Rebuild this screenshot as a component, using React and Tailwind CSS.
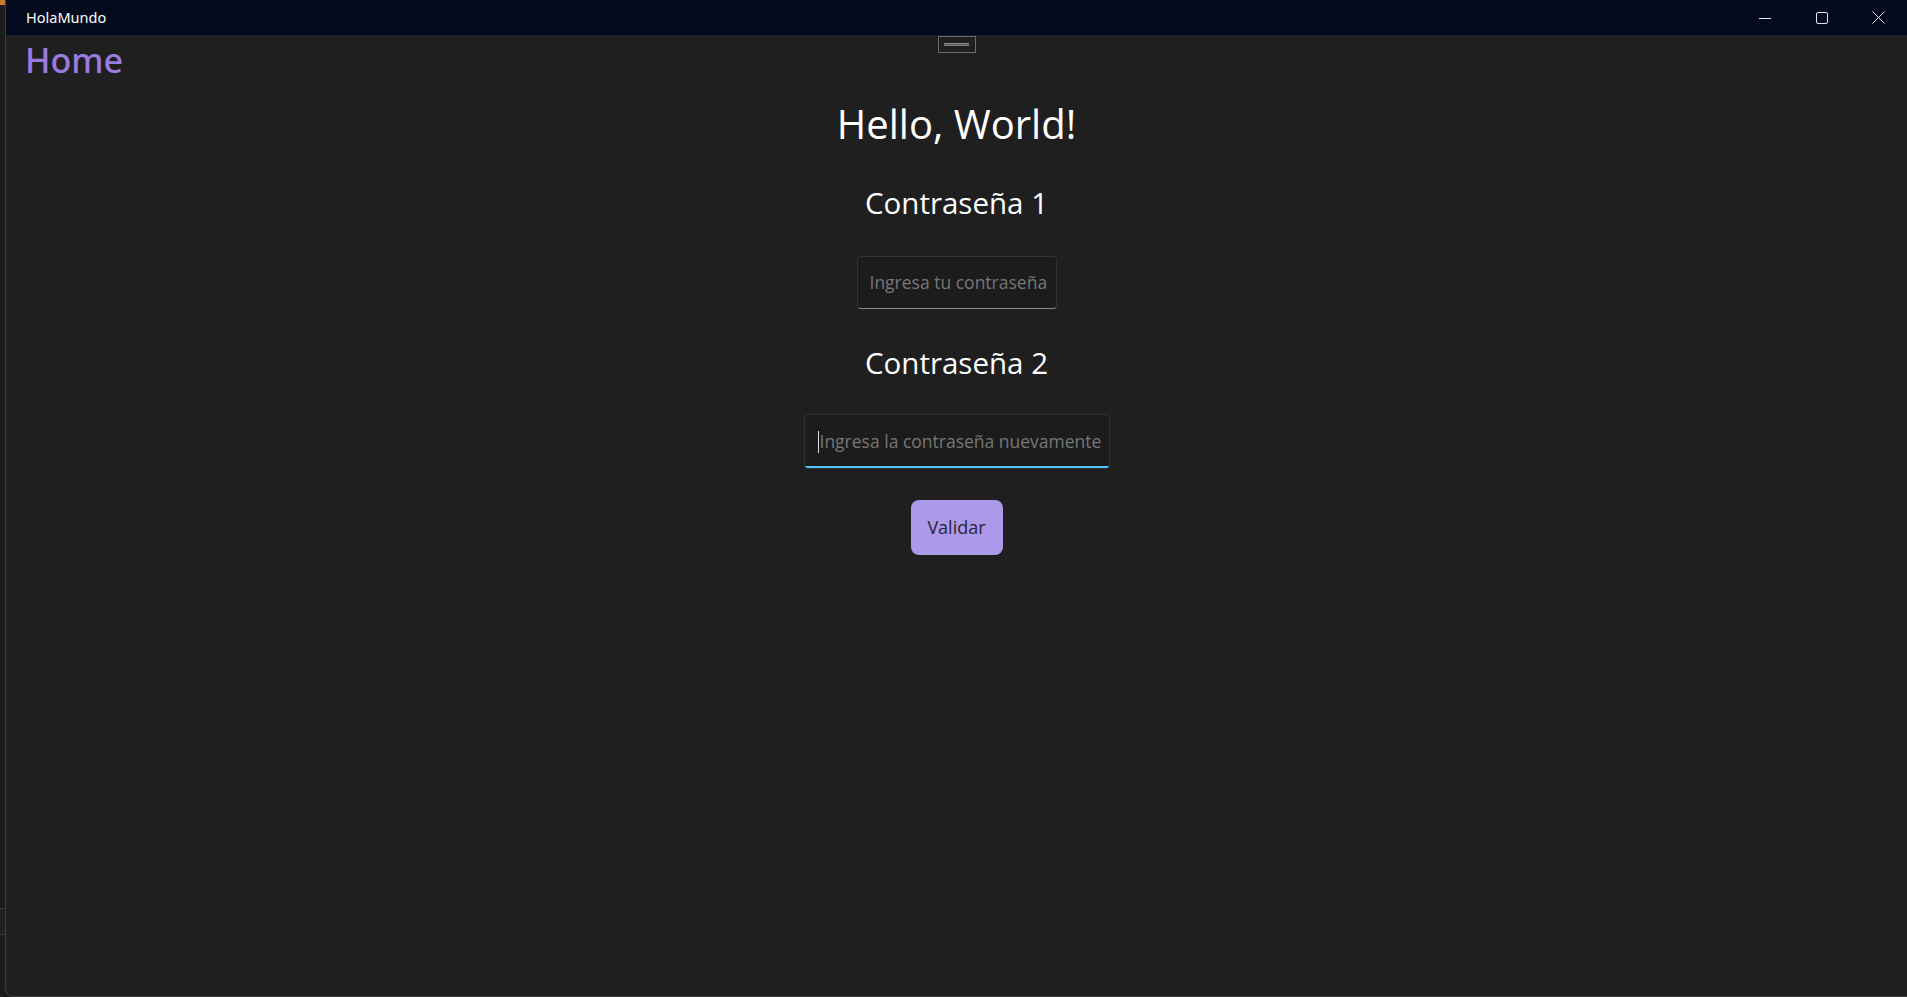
import React from "react";

export default function App() {
  const body = { fontFamily: '"Open Sans", "Noto Sans", sans-serif' };
  return (
    <div className="flex h-[997px] w-[1907px] overflow-hidden bg-[#161616]" style={body}>
      {/* left sliver of another window */}
      <div className="flex w-[5px] flex-col">
        <div className="h-[5px] w-[5px] bg-[#c77a2a]" />
        <div className="h-[903px] bg-[#1b1b1b]" />
        <div className="h-[1px] bg-[#3a3a3a]" />
        <div className="h-[25px] bg-[#202020]" />
        <div className="h-[1px] bg-[#3a3a3a]" />
        <div className="flex-1 bg-[#1b1b1b]" />
      </div>
      <div className="flex flex-1 flex-col overflow-hidden rounded-bl-[8px] border-l border-b border-[#3c3c3c] bg-[#1f1f1f]">
        {/* title bar */}
        <div className="flex h-[35px] items-center bg-[#010b1d] pl-[20px] text-white">
          <span className="text-[14.5px] leading-none" style={{ fontFamily: '"Noto Sans", "Open Sans", sans-serif' }}>HolaMundo</span>
          <div className="ml-auto flex h-full items-center">
            <div className="flex h-full w-[57px] items-center justify-center">
              <svg width="12" height="12" viewBox="0 0 12 12"><line x1="0" y1="6.5" x2="12" y2="6.5" stroke="#e6e6e6" strokeWidth="1" /></svg>
            </div>
            <div className="flex h-full w-[57px] items-center justify-center">
              <svg width="12" height="12" viewBox="0 0 12 12"><rect x="0.5" y="0.5" width="11" height="11" rx="1.5" fill="none" stroke="#e6e6e6" strokeWidth="1" /></svg>
            </div>
            <div className="flex h-full w-[57px] items-center justify-center">
              <svg width="13" height="13" viewBox="0 0 13 13"><path d="M0.5 0.5 L12.5 12.5 M12.5 0.5 L0.5 12.5" stroke="#e6e6e6" strokeWidth="1" /></svg>
            </div>
          </div>
        </div>

        {/* content */}
        <div className="relative flex flex-1 flex-col">
          <div className="absolute left-1/2 top-[1px] flex h-[17px] w-[38px] -translate-x-1/2 flex-col items-center justify-center border border-[#6b6b6b]">
            <div className="h-[1px] w-[25px] bg-[#8c8c8c]" />
            <div className="h-[1px] w-[25px] bg-[#555555]" />
            <div className="h-[1px] w-[25px] bg-[#7a7a7a]" />
          </div>
          <div className="flex h-[48px] items-start pl-[19px]">
            <span className="text-[34px] font-medium leading-[50px] text-[#9b7be0]" style={{ fontFamily: '"Noto Sans", "Open Sans", sans-serif' }}>Home</span>
          </div>

          <div className="flex flex-col items-center pt-[13px]">
            <h1 className="text-[40px] leading-[55px] text-white">Hello, World!</h1>
            <h2 className="mt-[32px] text-[29.5px] leading-[40px] text-white">Contraseña 1</h2>
            <div className="mt-[33px] flex h-[53px] w-[200px] items-center rounded-[4px] border border-[#333333] border-b-[#8a8a8a] bg-[#1c1c1c] pl-[12px]">
              <span className="whitespace-nowrap text-[17.5px] leading-none text-[#777777]">Ingresa tu contraseña</span>
            </div>
            <h2 className="mt-[34px] text-[29.5px] leading-[40px] text-white">Contraseña 2</h2>
            <div className="relative mt-[31px] flex h-[55px] w-[306px] items-center overflow-hidden rounded-[4px] border border-[#333333] bg-[#1c1c1c] pl-[13px]">
              <span className="mr-[1px] h-[22px] w-[1px] shrink-0 bg-[#dddddd]" />
              <span className="whitespace-nowrap text-[17.5px] leading-none text-[#777777]">Ingresa la contraseña nuevamente</span>
              <div className="absolute bottom-0 left-0 right-0 h-[2px] bg-[#4cc2ff]" />
            </div>
            <button className="mt-[31px] flex h-[55px] w-[92px] items-center justify-center rounded-[8px] bg-[#ad99e9] text-[18px] text-[#2a2438]">
              Validar
            </button>
          </div>
        </div>
      </div>
    </div>
  );
}
